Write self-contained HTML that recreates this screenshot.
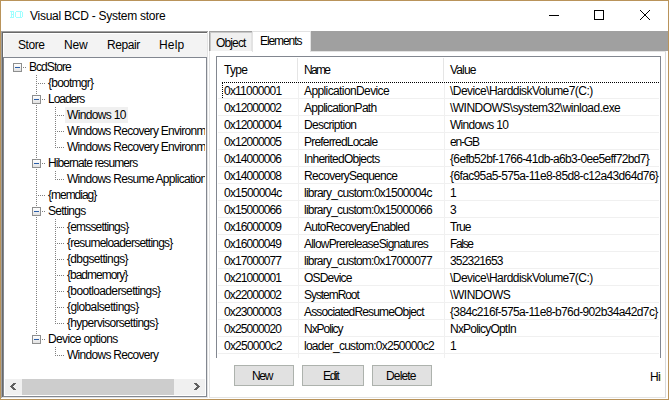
<!DOCTYPE html>
<html><head><meta charset="utf-8">
<style>
*{margin:0;padding:0;box-sizing:border-box}
html,body{width:669px;height:400px;overflow:hidden;background:#fff}
body{position:relative;font-family:"Liberation Sans",sans-serif;color:#000}
.a{position:absolute}
.t{position:absolute;white-space:nowrap;font-size:11px;line-height:16px}
.full{position:absolute;left:0;top:0;width:669px;height:400px}
.r{position:absolute}
#title{left:30px;top:7px;font-size:11.5px;line-height:16px;color:#000}
#icon{left:10px;top:10px;font-size:8px;line-height:9px;font-weight:bold;color:#8ff}
#menu span{position:absolute;top:37px;font-size:11.5px;line-height:16px}
#treec{clip-path:inset(58px 464px 22px 5px)}
.dotv{position:absolute;width:1px;background-image:linear-gradient(#808080 50%,transparent 50%);background-size:1px 2px}
.doth{position:absolute;height:1px;background-image:linear-gradient(90deg,#808080 50%,transparent 50%);background-size:2px 1px}
.box{position:absolute;width:9px;height:9px;border:1px solid #8e8f8f;background:linear-gradient(#fff,#e2e2e2)}
.box:after{content:"";position:absolute;left:1px;top:3px;width:5px;height:1px;background:#2a5ea8}
.tt{position:absolute;white-space:nowrap;font-size:12px;line-height:16px;padding:0 2px}
.sel{background:#f0f0f0}
#lvc{clip-path:inset(57px 9px 42px 217px)}
.hsep{position:absolute;top:58px;width:1px;height:23px;background:#e5e5e5}
.gv{position:absolute;top:82px;width:1px;height:276px;background:#f0f0f0}
.gh{position:absolute;left:218px;width:441px;height:1px;background:#f0f0f0}
.lr{position:absolute;left:0;height:17px;width:669px}
.lr span{position:absolute;top:0;font-size:12px;line-height:17px;white-space:nowrap}
.btn{position:absolute;top:365px;height:21px;background:#e1e1e1;border:1px solid #adb2ad;font-size:11px;line-height:19px;text-align:center}
#focus{left:222px;top:82px;width:437px;height:16px;border-top:1px dotted #000;border-left:1px dotted #000}
</style></head><body>
<!-- frame -->
<div class="r" style="left:0;top:0;width:669px;height:1px;background:#b9935a"></div>
<div class="r" style="left:0;top:0;width:1px;height:400px;background:#b9935a"></div>
<div class="r" style="left:668px;top:0;width:1px;height:400px;background:#b9935a"></div>
<div class="r" style="left:0;top:399px;width:669px;height:1px;background:#b9935a"></div>

<svg class="r" style="left:10px;top:11px" width="13" height="7" viewBox="0 0 13 7" shape-rendering="crispEdges"><path d="M0 0h1v1h-1zM1 0h1v1h-1zM2 0h1v1h-1zM3 0h1v1h-1zM1 1h1v1h-1zM3 1h1v1h-1zM1 2h1v1h-1zM3 2h1v1h-1zM1 3h1v1h-1zM2 3h1v1h-1zM3 3h1v1h-1zM1 4h1v1h-1zM3 4h1v1h-1zM1 5h1v1h-1zM3 5h1v1h-1zM0 6h1v1h-1zM1 6h1v1h-1zM2 6h1v1h-1zM3 6h1v1h-1zM6 0h1v1h-1zM7 0h1v1h-1zM8 0h1v1h-1zM5 1h1v1h-1zM5 2h1v1h-1zM5 3h1v1h-1zM5 4h1v1h-1zM5 5h1v1h-1zM6 6h1v1h-1zM7 6h1v1h-1zM8 6h1v1h-1zM9 0h1v1h-1zM10 0h1v1h-1zM11 0h1v1h-1zM10 1h1v1h-1zM12 1h1v1h-1zM10 2h1v1h-1zM12 2h1v1h-1zM10 3h1v1h-1zM12 3h1v1h-1zM10 4h1v1h-1zM12 4h1v1h-1zM10 5h1v1h-1zM12 5h1v1h-1zM9 6h1v1h-1zM10 6h1v1h-1zM11 6h1v1h-1z" fill="#a0ffff"/></svg>
<div class="a" style="left:549px;top:15px;width:10px;height:1px;background:#000"></div>
<div class="a" style="left:594px;top:10px;width:10px;height:10px;border:1px solid #000"></div>
<svg class="a" style="left:640px;top:10px" width="10" height="10" viewBox="0 0 10 10" shape-rendering="crispEdges"><path d="M0 0h1v1h-1zM9 0h1v1h-1zM1 1h1v1h-1zM8 1h1v1h-1zM2 2h1v1h-1zM7 2h1v1h-1zM3 3h1v1h-1zM6 3h1v1h-1zM4 4h1v1h-1zM5 4h1v1h-1zM5 5h1v1h-1zM4 5h1v1h-1zM6 6h1v1h-1zM3 6h1v1h-1zM7 7h1v1h-1zM2 7h1v1h-1zM8 8h1v1h-1zM1 8h1v1h-1zM9 9h1v1h-1zM0 9h1v1h-1z" fill="#000"/></svg>

<!-- left pane fixed3d container x=1..208 y=31..398 -->
<div class="r" style="left:1px;top:31px;width:207px;height:1px;background:#a0a0a0"></div>
<div class="r" style="left:1px;top:31px;width:1px;height:367px;background:#a0a0a0"></div>
<div class="r" style="left:2px;top:32px;width:205px;height:1px;background:#696969"></div>
<div class="r" style="left:2px;top:32px;width:1px;height:365px;background:#696969"></div>
<div class="r" style="left:2px;top:397px;width:206px;height:1px;background:#e3e3e3"></div>
<div class="r" style="left:207px;top:32px;width:1px;height:366px;background:#e3e3e3"></div>
<!-- menu -->
<div id="menu">
<div class="r" style="left:3px;top:33px;width:204px;height:24px;background:#f3f3f3;border-top:1px solid #fff;border-left:1px solid #fff"></div>
</div>
<!-- tree -->
<div class="r" style="left:3px;top:57px;width:204px;height:340px;background:#fff;border:1px solid #828790"></div>
<div id="treec" class="full">
<div class="dotv" style="left:36px;top:75px;height:265px"></div>
<div class="dotv" style="left:55px;top:107px;height:41px"></div>
<div class="dotv" style="left:55px;top:171px;height:9px"></div>
<div class="dotv" style="left:55px;top:219px;height:105px"></div>
<div class="dotv" style="left:55px;top:347px;height:9px"></div>
<div class="box" style="left:13px;top:63px"></div>
<div class="doth" style="left:23px;top:67px;width:4px"></div>
<div class="tt" style="left:27px;top:59px;letter-spacing:-0.950px;">BcdStore</div>
<div class="doth" style="left:38px;top:83px;width:7px"></div>
<div class="tt" style="left:46px;top:75px;letter-spacing:-0.762px;">{bootmgr}</div>
<div class="box" style="left:32px;top:95px"></div>
<div class="doth" style="left:42px;top:99px;width:4px"></div>
<div class="tt" style="left:46px;top:91px;letter-spacing:-1.033px;">Loaders</div>
<div class="doth" style="left:57px;top:115px;width:7px"></div>
<div class="tt sel" style="left:65px;top:107px;letter-spacing:-0.672px;">Windows 10</div>
<div class="doth" style="left:57px;top:131px;width:7px"></div>
<div class="tt" style="left:65px;top:123px;letter-spacing:-0.720px;">Windows Recovery Environment</div>
<div class="doth" style="left:57px;top:147px;width:7px"></div>
<div class="tt" style="left:65px;top:139px;letter-spacing:-0.720px;">Windows Recovery Environment</div>
<div class="box" style="left:32px;top:159px"></div>
<div class="doth" style="left:42px;top:163px;width:4px"></div>
<div class="tt" style="left:46px;top:155px;letter-spacing:-0.891px;">Hibernate resumers</div>
<div class="doth" style="left:57px;top:179px;width:7px"></div>
<div class="tt" style="left:65px;top:171px;letter-spacing:-0.720px;">Windows Resume Application</div>
<div class="doth" style="left:38px;top:195px;width:7px"></div>
<div class="tt" style="left:46px;top:187px;letter-spacing:-1.013px;">{memdiag}</div>
<div class="box" style="left:32px;top:207px"></div>
<div class="doth" style="left:42px;top:211px;width:4px"></div>
<div class="tt" style="left:46px;top:203px;letter-spacing:-0.736px;">Settings</div>
<div class="doth" style="left:57px;top:227px;width:7px"></div>
<div class="tt" style="left:65px;top:219px;letter-spacing:-0.825px;">{emssettings}</div>
<div class="doth" style="left:57px;top:243px;width:7px"></div>
<div class="tt" style="left:65px;top:235px;letter-spacing:-0.783px;">{resumeloadersettings}</div>
<div class="doth" style="left:57px;top:259px;width:7px"></div>
<div class="tt" style="left:65px;top:251px;letter-spacing:-0.658px;">{dbgsettings}</div>
<div class="doth" style="left:57px;top:275px;width:7px"></div>
<div class="tt" style="left:65px;top:267px;letter-spacing:-1.000px;">{badmemory}</div>
<div class="doth" style="left:57px;top:291px;width:7px"></div>
<div class="tt" style="left:65px;top:283px;letter-spacing:-0.634px;">{bootloadersettings}</div>
<div class="doth" style="left:57px;top:307px;width:7px"></div>
<div class="tt" style="left:65px;top:299px;letter-spacing:-0.617px;">{globalsettings}</div>
<div class="doth" style="left:57px;top:323px;width:7px"></div>
<div class="tt" style="left:65px;top:315px;letter-spacing:-0.687px;">{hypervisorsettings}</div>
<div class="box" style="left:32px;top:335px"></div>
<div class="doth" style="left:42px;top:339px;width:4px"></div>
<div class="tt" style="left:46px;top:331px;letter-spacing:-0.642px;">Device options</div>
<div class="doth" style="left:57px;top:355px;width:7px"></div>
<div class="tt" style="left:65px;top:347px;letter-spacing:-0.717px;">Windows Recovery</div>
</div>
<div class="r" style="left:5px;top:379px;width:200px;height:16px;background:#f0f0f0"></div>
<div class="r" style="left:22px;top:379px;width:152px;height:16px;background:#cdcdcd"></div>
<svg class="r" style="left:10px;top:383px" width="6" height="7" viewBox="0 0 6 7" shape-rendering="crispEdges"><path d="M3 0h3v1h-3zM2 1h3v1h-3zM1 2h3v1h-3zM0 3h3v1h-3zM1 4h3v1h-3zM2 5h3v1h-3zM3 6h3v1h-3z" fill="#606060"/></svg>
<svg class="r" style="left:194px;top:383px" width="6" height="7" viewBox="0 0 6 7" shape-rendering="crispEdges"><path d="M0 0h3v1h-3zM1 1h3v1h-3zM2 2h3v1h-3zM3 3h3v1h-3zM2 4h3v1h-3zM1 5h3v1h-3zM0 6h3v1h-3z" fill="#606060"/></svg>

<!-- right pane -->
<div class="r" style="left:209px;top:31px;width:459px;height:20px;background:#a0a0a0"></div>
<div class="r" style="left:209px;top:51px;width:457px;height:347px;background:#fff;border:1px solid #e3e3e3;border-top:none;border-right-color:#dadada"></div>
<div class="r" style="left:210px;top:32px;width:42px;height:19px;background:#c8c8c8"></div>
<div class="r" style="left:211px;top:33px;width:41px;height:18px;background:#f0f0f0;border-right:1px solid #e3e3e3"></div>
<div class="r" style="left:311px;top:51px;width:355px;height:1px;background:#e3e3e3"></div>
<div class="r" style="left:252px;top:31px;width:59px;height:21px;background:#fff;border-left:1px solid #e3e3e3;border-top:1px solid #e3e3e3;border-right:1px solid #e3e3e3"></div>
<div class="r" style="left:216px;top:56px;width:445px;height:302px;background:#fff;border:1px solid #828790;border-bottom:none"></div>
<div id="lvc" class="full">
<div class="lr" style="top:62px"><span style="left:224px;letter-spacing:-0.700px;">Type</span><span style="left:304px;letter-spacing:-1.667px;">Name</span><span style="left:450px;letter-spacing:-0.850px;">Value</span></div>
<div class="hsep" style="left:297px"></div>
<div class="hsep" style="left:443px"></div>
<div class="gv" style="left:298px"></div>
<div class="gv" style="left:444px"></div>
<div class="lr" style="top:83px"><span style="left:224px;letter-spacing:-0.783px;">0x11000001</span><span style="left:304px;letter-spacing:-0.606px;">ApplicationDevice</span><span style="left:450px;letter-spacing:-0.546px;">\Device\HarddiskVolume7(C:)</span></div>
<div class="gh" style="top:98px"></div>
<div class="lr" style="top:100px"><span style="left:224px;letter-spacing:-0.894px;">0x12000002</span><span style="left:304px;letter-spacing:-0.736px;">ApplicationPath</span><span style="left:450px;letter-spacing:-0.521px;">\WINDOWS\system32\winload.exe</span></div>
<div class="gh" style="top:115px"></div>
<div class="lr" style="top:117px"><span style="left:224px;letter-spacing:-0.894px;">0x12000004</span><span style="left:304px;letter-spacing:-0.700px;">Description</span><span style="left:450px;letter-spacing:-0.728px;">Windows 10</span></div>
<div class="gh" style="top:132px"></div>
<div class="lr" style="top:134px"><span style="left:224px;letter-spacing:-0.894px;">0x12000005</span><span style="left:304px;letter-spacing:-0.807px;">PreferredLocale</span><span style="left:450px;letter-spacing:-1.200px;">en-GB</span></div>
<div class="gh" style="top:149px"></div>
<div class="lr" style="top:151px"><span style="left:224px;letter-spacing:-0.894px;">0x14000006</span><span style="left:304px;letter-spacing:-0.750px;">InheritedObjects</span><span style="left:450px;letter-spacing:-0.653px;">{6efb52bf-1766-41db-a6b3-0ee5eff72bd7}</span></div>
<div class="gh" style="top:166px"></div>
<div class="lr" style="top:168px"><span style="left:224px;letter-spacing:-0.894px;">0x14000008</span><span style="left:304px;letter-spacing:-0.717px;">RecoverySequence</span><span style="left:450px;letter-spacing:-0.625px;">{6fac95a5-575a-11e8-85d8-c12a43d64d76}</span></div>
<div class="gh" style="top:183px"></div>
<div class="lr" style="top:185px"><span style="left:224px;letter-spacing:-0.783px;">0x1500004c</span><span style="left:304px;letter-spacing:-0.762px;">library_custom:0x1500004c</span><span style="left:450px;letter-spacing:-0.600px;">1</span></div>
<div class="gh" style="top:200px"></div>
<div class="lr" style="top:202px"><span style="left:224px;letter-spacing:-0.894px;">0x15000066</span><span style="left:304px;letter-spacing:-0.783px;">library_custom:0x15000066</span><span style="left:450px;letter-spacing:-0.600px;">3</span></div>
<div class="gh" style="top:217px"></div>
<div class="lr" style="top:219px"><span style="left:224px;letter-spacing:-0.894px;">0x16000009</span><span style="left:304px;letter-spacing:-0.756px;">AutoRecoveryEnabled</span><span style="left:450px;letter-spacing:-0.950px;">True</span></div>
<div class="gh" style="top:234px"></div>
<div class="lr" style="top:236px"><span style="left:224px;letter-spacing:-0.894px;">0x16000049</span><span style="left:304px;letter-spacing:-0.804px;">AllowPrereleaseSignatures</span><span style="left:450px;letter-spacing:-1.325px;">False</span></div>
<div class="gh" style="top:251px"></div>
<div class="lr" style="top:253px"><span style="left:224px;letter-spacing:-0.894px;">0x17000077</span><span style="left:304px;letter-spacing:-0.783px;">library_custom:0x17000077</span><span style="left:450px;letter-spacing:-0.825px;">352321653</span></div>
<div class="gh" style="top:268px"></div>
<div class="lr" style="top:270px"><span style="left:224px;letter-spacing:-0.894px;">0x21000001</span><span style="left:304px;letter-spacing:-0.807px;">OSDevice</span><span style="left:450px;letter-spacing:-0.546px;">\Device\HarddiskVolume7(C:)</span></div>
<div class="gh" style="top:285px"></div>
<div class="lr" style="top:287px"><span style="left:224px;letter-spacing:-0.894px;">0x22000002</span><span style="left:304px;letter-spacing:-1.061px;">SystemRoot</span><span style="left:450px;letter-spacing:-0.450px;">\WINDOWS</span></div>
<div class="gh" style="top:302px"></div>
<div class="lr" style="top:304px"><span style="left:224px;letter-spacing:-0.894px;">0x23000003</span><span style="left:304px;letter-spacing:-0.831px;">AssociatedResumeObject</span><span style="left:450px;letter-spacing:-0.641px;">{384c216f-575a-11e8-b76d-902b34a42d7c}</span></div>
<div class="gh" style="top:319px"></div>
<div class="lr" style="top:321px"><span style="left:224px;letter-spacing:-0.894px;">0x25000020</span><span style="left:304px;letter-spacing:-1.021px;">NxPolicy</span><span style="left:450px;letter-spacing:-0.783px;">NxPolicyOptIn</span></div>
<div class="gh" style="top:336px"></div>
<div class="lr" style="top:338px"><span style="left:224px;letter-spacing:-0.783px;">0x250000c2</span><span style="left:304px;letter-spacing:-0.733px;">loader_custom:0x250000c2</span><span style="left:450px;letter-spacing:-0.600px;">1</span></div>
<div class="gh" style="top:353px"></div>
<div id="focus" class="a"></div>
</div>

<div class="btn" style="left:234px;width:60px"></div>
<div class="btn" style="left:302px;width:62px"></div>
<div class="btn" style="left:372px;width:60px"></div>
<div class="a" style="left:645px;top:366px;width:16px;height:20px;overflow:hidden"><div class="t" style="left:5px;top:3px;font-size:12px;letter-spacing:-0.55px">Hinted</div></div>
<div class="t" style="left:30px;top:8px;font-size:12px;letter-spacing:-0.255px;">Visual BCD - System store</div>
<div class="t" style="left:18px;top:37px;font-size:12px;letter-spacing:-0.450px;">Store</div>
<div class="t" style="left:64px;top:37px;font-size:12px;letter-spacing:-0.150px;">New</div>
<div class="t" style="left:107px;top:37px;font-size:12px;letter-spacing:-0.440px;">Repair</div>
<div class="t" style="left:159px;top:37px;font-size:12px;letter-spacing:0.167px;">Help</div>
<div class="t" style="left:216px;top:35px;font-size:12px;letter-spacing:-0.860px;">Object</div>
<div class="t" style="left:260px;top:33px;font-size:12px;letter-spacing:-1.086px;">Elements</div>
<div class="t" style="left:252px;top:368px;font-size:12px;letter-spacing:-1.350px;">New</div>
<div class="t" style="left:323px;top:368px;font-size:12px;letter-spacing:-1.300px;">Edit</div>
<div class="t" style="left:386px;top:368px;font-size:12px;letter-spacing:-0.840px;">Delete</div>
</body></html>
